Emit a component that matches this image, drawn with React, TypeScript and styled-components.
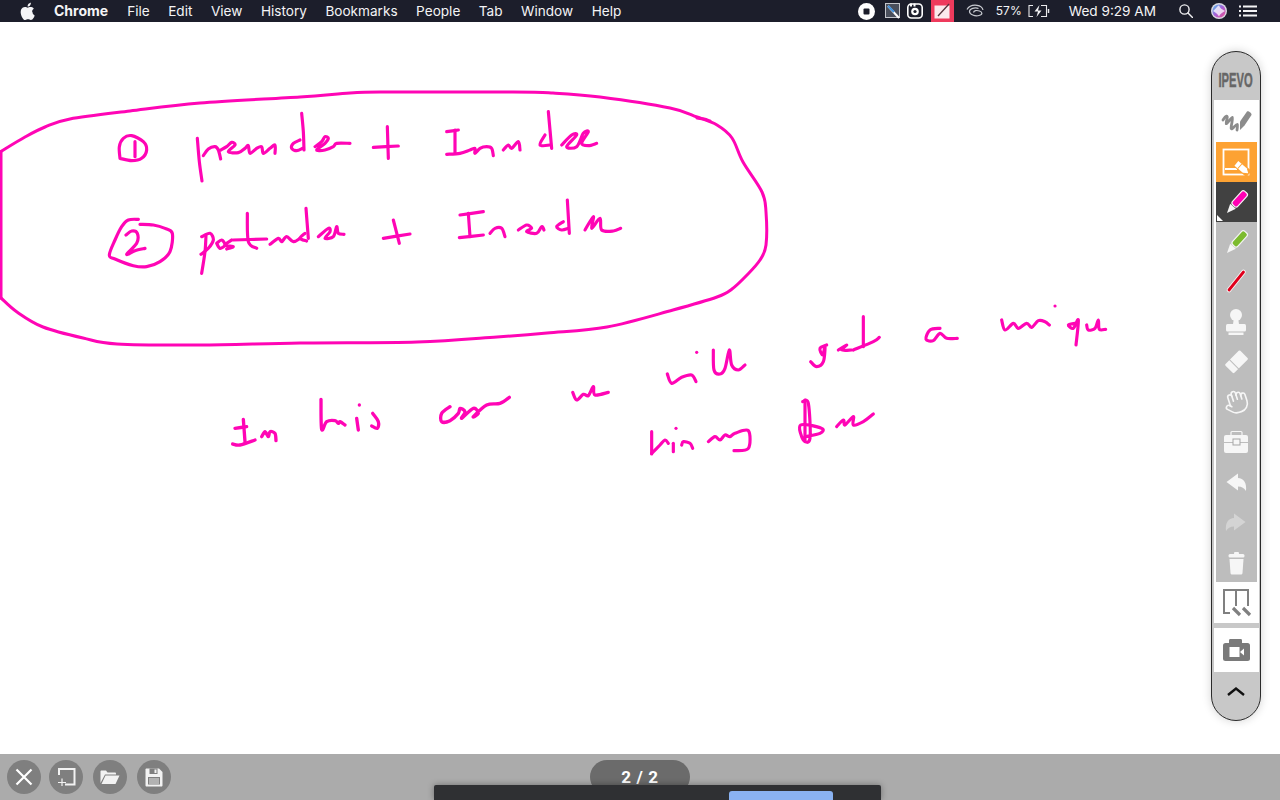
import React from "react";
import styled, { createGlobalStyle } from "styled-components";
import { Hand } from "lucide-react";

const GlobalStyle = createGlobalStyle`
  html, body {
    margin: 0;
    padding: 0;
    height: 100%;
    overflow: hidden;
    background: #fff;
  }
  #root {
    height: 100%;
  }
`;

const INK = "#ff05b5";

// ink strokes, each list of points is one pen stroke. coords are in page pixels (scale 1)
// or in 3x crops offset by ox/oy (scale 1/3), which was easier to trace
const inkLayers = [
  {
    ox: 0,
    oy: 0,
    scale: 1,
    width: 3,
    strokes: [
      "0,152 0,152 25,137 45,127 70,119 130,111 200,103 300,97 350,93 380,92 513,92 553,93 600,97 670,108 697,117 717,125 732,138 743,162 762,192 766,212 766,245 760,260 747,275 732,289 717,297 673,310 607,327 547,333 497,337 417,342 300,343 200,345 117,344 83,338 43,327 17,312 1,298 1,298",
      "1,298 1,152",
      "697,118 704,119 710,121",
    ],
  },
  {
    ox: 0,
    oy: 85,
    scale: 1 / 3,
    width: 9.5,
    strokes: [
      "360,220 358,185 370,160 395,152 430,170 440,195 425,220 395,227 360,220",
      "405,170 405,215",
      "592,160 598,230 606,288",
      "610,212 625,192 645,185 655,195 662,222",
      "662,195 680,185 695,172 705,180 685,200 715,203 735,190 745,182 750,205 770,190 785,185 790,205 810,190 825,180 825,205",
      "905,85 910,140 912,195",
      "900,165 880,175 875,190 890,197 908,190",
      "945,185 965,170 975,155 985,160 975,175 950,195 975,195 1000,185 1010,175 1050,175",
      "415,403 385,405 365,425 345,465 328,510 345,522 400,542 440,545 480,530 510,500 517,445 495,430 460,420 420,418",
      "378,450 395,438 412,445 410,475 380,508 405,497 435,490",
      "618,450 615,500 605,565",
      "605,455 630,445 640,465 625,490 603,508",
      "650,475 665,465 675,480 660,490 650,475",
      "695,465 675,480 700,485 680,492",
      "742,385 745,470 770,490",
      "700,465 800,462",
      "810,478 835,460 845,470 860,455 880,470 900,460",
      "918,370 925,460",
      "915,445 900,460 920,468",
      "955,455 985,430 990,440 975,460 1000,455 1010,425 1015,445 1032,448",
    ],
  },
  {
    ox: 380,
    oy: 85,
    scale: 1 / 3,
    width: 9.5,
    strokes: [
      "-20,187 55,183",
      "22,125 25,220",
      "200,140 235,135",
      "225,135 225,205",
      "200,208 240,205 270,195 285,190 285,205 300,190 320,185 335,190 340,212",
      "370,195 385,180 395,190 415,170 420,195",
      "505,80 515,190",
      "495,150 480,180 510,180",
      "545,180 575,150 590,150 560,185 590,185 610,145 625,140 605,175 625,182 650,175",
      "10,460 90,447",
      "40,405 58,475",
      "240,390 310,380",
      "265,385 270,455",
      "238,458 310,450",
      "330,445 345,430 365,430 375,455",
      "415,435 440,420 455,430 440,440 470,445 485,425 492,435",
      "562,345 568,445",
      "550,410 530,425 545,435 565,430",
      "615,435 640,395 635,430 660,400 665,435 700,438 722,430",
    ],
  },
  {
    ox: 220,
    oy: 380,
    scale: 1 / 3,
    width: 10,
    strokes: [
      "45,145 80,140",
      "70,118 75,185",
      "38,192 60,195 105,180",
      "125,170 135,155 145,170 150,155 165,160 168,182",
      "303,58 305,148 320,125 345,122 355,130 360,125 375,135",
      "410,115 415,150",
      "418,75",
      "458,100 475,125 472,145 455,138",
      "690,80 665,100 665,125 690,122 715,100 720,85 735,95 725,115 760,85 775,100 760,110 800,75 840,70 868,52",
    ],
  },
  {
    ox: 560,
    oy: 375,
    scale: 1 / 3,
    width: 9.5,
    strokes: ["38,52 50,75 70,58 85,62 100,35 105,60 145,52"],
  },
  {
    ox: 640,
    oy: 300,
    scale: 1 / 3,
    width: 9.5,
    strokes: [
      "82,222 95,250 125,232 155,225 168,245",
      "170,157",
      "220,150 222,210 240,222 255,205 268,150 275,195 295,210 315,195",
      "560,135 540,145 548,165 555,140 550,185 530,200 512,185",
      "595,150 620,135 605,150 635,150",
      "670,50 670,140",
      "640,150 700,125 718,112",
      "900,85 870,90 858,118 880,122 900,100 920,115 952,115",
      "1085,60 1095,90 1120,70 1135,85 1160,70 1175,82 1195,62 1215,65 1228,75",
      "1245,18",
      "1305,70 1285,75 1300,85 1315,60 1308,135",
      "1340,75 1345,90 1365,85 1375,60 1378,88 1397,88",
      "35,395 35,462",
      "35,460 60,435 75,420 85,430",
      "100,430 100,455",
      "108,385",
      "125,435 130,425 150,430 158,445",
      "205,425 225,410 240,420 255,405 270,410 285,400 325,392 325,445 282,452",
      "495,300 495,420",
      "488,305 505,310 510,415 490,420 482,375 545,385 540,400 495,410",
      "590,380 610,360 615,375 640,350 640,375 670,365 700,342",
    ],
  },
];

// catmull-rom through the traced points, so loops stay but corners don't look ruled
const strokePath = (stroke: string) => {
  const pts = stroke.split(" ").map((p) => p.split(",").map(Number));
  if (pts.length === 1) return `M${pts[0][0]} ${pts[0][1]}l.1 0`;
  let d = `M${pts[0][0]} ${pts[0][1]}`;
  for (let i = 0; i < pts.length - 1; i++) {
    const p0 = pts[Math.max(i - 1, 0)];
    const p1 = pts[i];
    const p2 = pts[i + 1];
    const p3 = pts[Math.min(i + 2, pts.length - 1)];
    const c1x = p1[0] + (p2[0] - p0[0]) / 6;
    const c1y = p1[1] + (p2[1] - p0[1]) / 6;
    const c2x = p2[0] - (p3[0] - p1[0]) / 6;
    const c2y = p2[1] - (p3[1] - p1[1]) / 6;
    d += `C${c1x} ${c1y} ${c2x} ${c2y} ${p2[0]} ${p2[1]}`;
  }
  return d;
};

const menuItems = ["File", "Edit", "View", "History", "Bookmarks", "People", "Tab", "Window", "Help"];

const Page = styled.div`
  display: flex;
  flex-direction: column;
  width: 1280px;
  height: 800px;
  overflow: hidden;
`;

const MenuBar = styled.header`
  display: flex;
  align-items: center;
  justify-content: space-between;
  flex: none;
  height: 22px;
  padding: 0 23px 0 18px;
  background: #1c1e2b;
  color: #f4f4f6;
  font: 400 13.6px/22px Inter, "Liberation Sans", sans-serif;
`;

const MenuLeft = styled.nav`
  display: flex;
  align-items: center;
`;

const AppleMark = styled.svg`
  display: block;
  width: 17px;
  height: 20.5px;
  margin-right: 19px;
`;

const AppName = styled.span`
  font-weight: 700;
  font-size: 14px;
  margin-right: 19px;
`;

const MenuItem = styled.span`
  margin-right: 18.5px;
`;

const MenuRight = styled.div`
  display: flex;
  align-items: center;
  height: 22px;
`;

const StatusIcon = styled.svg<{ $gap: number }>`
  display: block;
  flex: none;
  margin-left: ${(p) => p.$gap}px;
`;

const StatusText = styled.span<{ $gap: number; $size?: number }>`
  margin-left: ${(p) => p.$gap}px;
  font-size: ${(p) => p.$size ?? 13.6}px;
  white-space: nowrap;
`;

const RedTile = styled.div`
  display: flex;
  align-items: center;
  justify-content: center;
  width: 23px;
  height: 22px;
  margin-left: 8px;
  background: #ee3a5c;
`;

const Canvas = styled.main`
  position: relative;
  flex: 1;
  min-height: 0;
  background: #fff;
`;

const InkSheet = styled.svg`
  display: block;
  width: 100%;
  height: 100%;
`;

const Toolbar = styled.aside`
  position: absolute;
  top: 29px;
  right: 19px;
  display: flex;
  flex-direction: column;
  box-sizing: border-box;
  width: 50px;
  height: 670px;
  border: 1.5px solid #2b2b2b;
  border-radius: 25px;
  background: #c8c8c8;
  box-shadow: 0 0 10px rgba(0, 0, 0, 0.18);
`;

const BrandCap = styled.div`
  display: flex;
  align-items: center;
  justify-content: center;
  flex: none;
  height: 47.5px;
  padding-top: 8px;
  box-sizing: border-box;
`;

const Brand = styled.span`
  color: #666;
  font: 700 20px/1 "Liberation Sans", sans-serif;
  -webkit-text-stroke: 0.5px #666;
  transform: scaleX(0.56);
`;

const WhiteGroup = styled.div`
  display: flex;
  flex-direction: column;
  flex: none;
  margin: 0 1.5px;
  padding: 0 2px;
  background: #fff;
`;

const toneColor = { white: "#fff", orange: "#fda233", dark: "#414141", grey: "#bdbdbd" };

const Slot = styled.div<{ $tone: keyof typeof toneColor; $h?: number }>`
  position: relative;
  flex: none;
  height: ${(p) => p.$h ?? 40}px;
  background: ${(p) => toneColor[p.$tone]};
`;

const SlotIcon = styled.svg`
  display: block;
  width: 40px;
  height: 100%;
`;

const HandIcon = styled(Hand)`
  display: block;
  margin: 7px 0 0 7px;
  color: #f6f6f6;
  transform: rotate(-18deg);
`;

const CornerFlag = styled.span`
  position: absolute;
  left: 1px;
  bottom: 1px;
  width: 0;
  height: 0;
  border-left: 6px solid #fff;
  border-top: 6px solid transparent;
`;

const CameraGroup = styled(WhiteGroup)`
  margin-top: 5px;
`;

const CollapseCap = styled.div`
  display: flex;
  align-items: center;
  justify-content: center;
  flex: 1;
  padding-bottom: 9px;
`;

const BottomBar = styled.footer`
  position: relative;
  display: flex;
  align-items: flex-start;
  flex: none;
  box-sizing: border-box;
  height: 46px;
  padding: 6px 0 0 7px;
  background: #ababab;
`;

const RoundButton = styled.button<{ $gap: number }>`
  display: flex;
  align-items: center;
  justify-content: center;
  flex: none;
  width: 34px;
  height: 34px;
  margin-left: ${(p) => p.$gap}px;
  padding: 0;
  border: 0;
  border-radius: 50%;
  background: #7f7f7f;
`;

const PagePill = styled.div`
  position: absolute;
  top: 6px;
  left: 590px;
  box-sizing: border-box;
  width: 100px;
  height: 34px;
  border-radius: 17px;
  background: #6b6b6b;
  color: #fff;
  font: 700 17px/35px Roboto, "Liberation Sans", sans-serif;
  letter-spacing: 0.6px;
  text-align: center;
`;

const ShareBar = styled.div`
  position: absolute;
  left: 434px;
  top: 31px;
  width: 447px;
  height: 15px;
  border-radius: 2px 2px 0 0;
  background: #2f3033;
  box-shadow: 0 0 6px rgba(0, 0, 0, 0.35);
`;

const ShareButton = styled.div`
  position: absolute;
  left: 295px;
  top: 6px;
  width: 104px;
  height: 9px;
  border-radius: 3px 3px 0 0;
  background: #8ab2f2;
`;

const Marker = ({ color }: { color: string }) => (
  <SlotIcon viewBox="0 0 40 40">
    <g transform="translate(11 31) rotate(42)">
      <path d="M0 0L-3.800 -9H3.800Z" fill="#f5f5f5" />
      <rect x="-3.600" y="-28" width="7.200" height="18" rx="2.400" fill={color} stroke="#f5f5f5" strokeWidth="1.200" />
    </g>
  </SlotIcon>
);

export default function App() {
  return (
    <Page>
      <GlobalStyle />
      <MenuBar>
        <MenuLeft>
          <AppleMark viewBox="0 0 14 17">
            <path
              fill="#f4f4f6"
              d="M11.6 9c0-1.7 1.4-2.5 1.5-2.6-.8-1.2-2.1-1.4-2.5-1.4-1.1-.1-2.1.6-2.6.6-.6 0-1.4-.6-2.3-.6C4.500 5 3.400 5.700 2.800 6.700c-1.300 2.200-.3 5.500.9 7.300.6.900 1.300 1.900 2.300 1.800.9 0 1.200-.6 2.300-.6s1.400.6 2.300.6c1 0 1.600-.9 2.200-1.700.7-1 1-2 1-2.100-.1 0-1.900-.7-1.900-3zM9.900 3.700c.5-.6.800-1.400.7-2.200-.7 0-1.500.5-2 1-.4.500-.8 1.300-.7 2.100.8.100 1.500-.4 2-.9z"
            />
          </AppleMark>
          <AppName>Chrome</AppName>
          {menuItems.map((item) => (
            <MenuItem key={item}>{item}</MenuItem>
          ))}
        </MenuLeft>
        <MenuRight>
          <StatusIcon $gap={0} width="17" height="17" viewBox="0 0 17 17">
            <circle cx="8.500" cy="8.500" r="8.500" fill="#fff" />
            <rect x="5.500" y="5.500" width="6" height="6" rx="1" fill="#1c1e2b" />
          </StatusIcon>
          <StatusIcon $gap={10} width="16" height="18" viewBox="0 0 16 18">
            <rect x="0.500" y="1.500" width="14" height="14" fill="#4a4f5c" stroke="#c4c6cc" />
            <path d="M3 4L14 16" stroke="#fff" strokeWidth="2" />
            <path d="M3 4L9 10" stroke="#3f8fdc" strokeWidth="2" />
          </StatusIcon>
          <StatusIcon $gap={6} width="16" height="18" viewBox="0 0 16 18">
            <rect x="0.800" y="2" width="14.400" height="14" rx="3.500" fill="none" stroke="#fff" strokeWidth="1.600" />
            <circle cx="8" cy="9.500" r="3.800" fill="#fff" />
            <circle cx="8" cy="9.500" r="1.600" fill="#1c1e2b" />
            <rect x="3" y="1.500" width="2" height="3" fill="#fff" />
            <rect x="6.500" y="1.500" width="2" height="3" fill="#fff" />
          </StatusIcon>
          <RedTile>
            <svg width="17" height="16" viewBox="0 0 17 16">
              <rect x="0.500" y="2.500" width="15" height="13" fill="#fbe9ec" />
              <path d="M4 13L15 1" stroke="#55333b" strokeWidth="1.300" />
            </svg>
          </RedTile>
          <StatusIcon $gap={12} width="18" height="14" viewBox="0 0 18 14" fill="none" stroke="#c9cbd1" strokeWidth="1.200">
            <path d="M1 5.500C3 2 7 .8 11 1.300S16.500 3.500 17 6" />
            <path d="M12.500 4.500C9 3 3.500 4.500 3.500 7.500S9 12.500 13 11.500 16.500 8 13.500 7 8 6.500 7.500 8.500" />
          </StatusIcon>
          <StatusText $gap={12} $size={12}>57%</StatusText>
          <StatusIcon $gap={6} width="22" height="14" viewBox="0 0 22 14" fill="none" stroke="#e9e9ec" strokeWidth="1.100">
            <path d="M5 1.500H1v11h4M13 1.500h5.500v11H13" />
            <path d="M20.500 5v4" strokeWidth="1.500" />
            <path d="M11.500 1L6.500 7.500h3.500L8.500 13l5-6.500H10Z" fill="#f4f4f6" stroke="none" />
          </StatusIcon>
          <StatusText $gap={19}>Wed 9:29 AM</StatusText>
          <StatusIcon $gap={23} width="14" height="14" viewBox="0 0 14 14" fill="none" stroke="#f0f0f2" strokeWidth="1.400">
            <circle cx="5.500" cy="5.500" r="4.600" />
            <path d="M9 9l4.500 4.500" strokeLinecap="round" />
          </StatusIcon>
          <StatusIcon $gap={18} width="16" height="16" viewBox="0 0 16 16">
            <defs>
              <linearGradient id="siri" x1="0" y1="0" x2="1" y2="1">
                <stop offset="0" stopColor="#4fc6ee" />
                <stop offset="0.500" stopColor="#a65fd6" />
                <stop offset="1" stopColor="#ea4f8e" />
              </linearGradient>
            </defs>
            <circle cx="8" cy="8" r="8" fill="#d9d9e2" />
            <circle cx="8" cy="8" r="6.600" fill="url(#siri)" />
            <path d="M2 8C5 6 6 3 8 2.500 9 5 11 6.500 14 8 11 9.500 9 11 8 13.500 6.500 11 5 9.500 2 8Z" fill="#fff" opacity="0.75" />
          </StatusIcon>
          <StatusIcon $gap={12} width="18" height="12" viewBox="0 0 18 12" fill="#f4f4f6">
            <rect x="0" y="0.500" width="2" height="2" />
            <rect x="4" y="0.500" width="14" height="2" />
            <rect x="0" y="5" width="2" height="2" />
            <rect x="4" y="5" width="14" height="2" />
            <rect x="0" y="9.500" width="2" height="2" />
            <rect x="4" y="9.500" width="14" height="2" />
          </StatusIcon>
        </MenuRight>
      </MenuBar>

      <Canvas>
        <InkSheet viewBox="0 22 1280 732" fill="none" stroke={INK} strokeLinecap="round" strokeLinejoin="round">
          {inkLayers.map((layer) => (
            <g key={`${layer.ox}-${layer.oy}`} transform={`translate(${layer.ox} ${layer.oy}) scale(${layer.scale})`} strokeWidth={layer.width}>
              {layer.strokes.map((stroke) => (
                <path key={stroke} d={strokePath(stroke)} />
              ))}
            </g>
          ))}
        </InkSheet>

        <Toolbar>
          <BrandCap>
            <Brand>IPEVO</Brand>
          </BrandCap>
          <WhiteGroup>
            <Slot $tone="white" $h={42}>
              <SlotIcon viewBox="0 0 40 42">
                <path d="M7 20C10 15 12 15 11 19S9 26 13 21 17 16 16 22 14 31 18 27 22 23 21 30" fill="none" stroke="#8c8c8c" strokeWidth="2.800" strokeLinecap="round" />
                <path d="M24 30L24 21.500 31 11.500C32 10.500 36 13 35.500 15L28.500 25.500Z" fill="#8c8c8c" />
              </SlotIcon>
            </Slot>
            <Slot $tone="orange">
              <SlotIcon viewBox="0 0 40 40" fill="none">
                <rect x="7.500" y="7.500" width="25" height="25" stroke="#fff" strokeWidth="1.800" />
                <path d="M9 27H21" stroke="#fff" strokeWidth="2" />
                <g transform="translate(26.500 26.500) rotate(40)">
                  <rect x="-8.500" y="-4" width="17" height="8" rx="1" fill="#fda233" />
                  <path d="M-8 -3H3L7.500 0 3 3H-8Z" fill="#fff" />
                  <path d="M-3.500 -3V3" stroke="#fda233" strokeWidth="1" />
                </g>
              </SlotIcon>
            </Slot>
            <Slot $tone="dark">
              <Marker color="#ff00b4" />
              <CornerFlag />
            </Slot>
            <Slot $tone="grey">
              <Marker color="#7cbb2e" />
            </Slot>
            <Slot $tone="grey">
              <SlotIcon viewBox="0 0 40 40" fill="none" strokeLinecap="round">
                <path d="M13 28L27.500 10" stroke="#f5f5f5" strokeWidth="4.600" />
                <path d="M13 28L27.500 10" stroke="#e0001c" strokeWidth="2.800" />
              </SlotIcon>
            </Slot>
            <Slot $tone="grey">
              <SlotIcon viewBox="0 0 40 40" fill="#f6f6f6">
                <circle cx="20" cy="13" r="6" />
                <path d="M18 16H22L23 22H17Z" />
                <rect x="10" y="22" width="20" height="7.500" rx="1.500" />
                <rect x="12.500" y="30.500" width="15" height="2.500" />
              </SlotIcon>
            </Slot>
            <Slot $tone="grey">
              <SlotIcon viewBox="0 0 40 40">
                <g transform="rotate(-45 20 20)">
                  <rect x="10" y="14" width="21" height="12.500" rx="1.200" fill="#f6f6f6" />
                  <rect x="16.500" y="13" width="1" height="14" fill="#bdbdbd" />
                </g>
              </SlotIcon>
            </Slot>
            <Slot $tone="grey">
              <HandIcon size={26} strokeWidth={1.500} />
            </Slot>
            <Slot $tone="grey">
              <SlotIcon viewBox="0 0 40 40">
                <path d="M15 13V10.500C15 10 15.500 9.500 16 9.500H25C25.500 9.500 26 10 26 10.500V13" fill="none" stroke="#f6f6f6" strokeWidth="1.200" />
                <rect x="8" y="13" width="24" height="18" rx="2" fill="#f6f6f6" />
                <path d="M8 20.500H32" stroke="#bdbdbd" strokeWidth="1" />
                <rect x="17" y="17" width="7" height="6" fill="#f6f6f6" stroke="#a5a5a5" strokeWidth="1" />
              </SlotIcon>
            </Slot>
            <Slot $tone="grey">
              <SlotIcon viewBox="0 0 40 40">
                <path d="M10.500 20L22 11.500V16C27.500 16 31 21 30 29 28 26 26 24.500 22 24.500V28.500Z" fill="#f6f6f6" />
              </SlotIcon>
            </Slot>
            <Slot $tone="grey">
              <SlotIcon viewBox="0 0 40 40">
                <path d="M29.500 20L18 11.500V16C12.500 16 9 21 10 29 12 26 14 24.500 18 24.500V28.500Z" fill="#d4d4d4" />
              </SlotIcon>
            </Slot>
            <Slot $tone="grey">
              <SlotIcon viewBox="0 0 40 40" fill="#f6f6f6">
                <rect x="18" y="10" width="5" height="2.500" rx="1" />
                <rect x="12.500" y="12" width="16" height="3.500" rx="1.500" />
                <path d="M13.500 17H27.500L26.500 31C26.400 32 25.500 32.500 25 32.500H16C15.500 32.500 14.600 32 14.500 31Z" />
              </SlotIcon>
            </Slot>
            <Slot $tone="white" $h={41}>
              <SlotIcon viewBox="0 0 40 41" fill="none">
                <path d="M14 31H8V8H32V24" stroke="#808080" strokeWidth="2" />
                <path d="M20 8V24" stroke="#808080" strokeWidth="2" />
                <path d="M17 26L24 33" stroke="#808080" strokeWidth="3.200" />
                <path d="M27 26L34 33" stroke="#808080" strokeWidth="3.200" />
              </SlotIcon>
            </Slot>
          </WhiteGroup>
          <CameraGroup>
            <Slot $tone="white" $h={44}>
              <SlotIcon viewBox="0 0 40 44">
                <path d="M13 16V12.500C13 11.500 13.500 11 14.500 11H24.500C25.500 11 26 11.500 26 12.500V16Z" fill="#7a7a7a" />
                <rect x="7" y="15" width="27" height="18" rx="2.500" fill="#7a7a7a" />
                <rect x="13.500" y="19" width="10" height="10" fill="#fff" />
                <path d="M24 24L28 20.500V27.500Z" fill="#fff" />
              </SlotIcon>
            </Slot>
          </CameraGroup>
          <CollapseCap>
            <svg width="20" height="11" viewBox="0 0 20 11" fill="none">
              <path d="M2 9L10 2.500 18 9" stroke="#111" strokeWidth="2.400" />
            </svg>
          </CollapseCap>
        </Toolbar>
      </Canvas>

      <BottomBar>
        <RoundButton $gap={0}>
          <svg width="20" height="20" viewBox="0 0 20 20">
            <path d="M2.500 2.500L17.500 17.500M17.500 2.500L2.500 17.500" stroke="#fff" strokeWidth="2.200" />
          </svg>
        </RoundButton>
        <RoundButton $gap={8}>
          <svg width="20" height="22" viewBox="0 0 20 22" fill="none" stroke="#f2f2f2" strokeWidth="2">
            <path d="M3 9V3H18.500V18.500H9" />
            <path d="M6 12.500V20M2 16.500H10" strokeWidth="1.200" />
          </svg>
        </RoundButton>
        <RoundButton $gap={10}>
          <svg width="20" height="16" viewBox="0 0 20 16">
            <path d="M0.500 14V2.500C0.500 1.800 1 1.500 1.500 1.500H6L7.500 3.500H15C15.500 3.500 16 4 16 4.500V5.500H5L0.500 14Z" fill="#f2f2f2" />
            <path d="M5.500 6.500H19.500L15.500 15H1.500Z" fill="#f2f2f2" />
          </svg>
        </RoundButton>
        <RoundButton $gap={10}>
          <svg width="18" height="19" viewBox="0 0 18 19">
            <path d="M0.500 1.500C0.500 1 1 .5 1.500 .5H14L17.500 4V17.500C17.500 18 17 18.500 16.500 18.500H1.500C1 18.500 .5 18 .5 17.500Z" fill="#f2f2f2" />
            <rect x="4.500" y="0.500" width="8" height="5.500" fill="#7f7f7f" />
            <rect x="9.500" y="1.500" width="2" height="3.500" fill="#f2f2f2" />
            <rect x="3" y="9" width="12" height="7.500" fill="#7f7f7f" />
            <path d="M4 11H14M4 13H14M4 15H14" stroke="#f2f2f2" strokeWidth="0.900" />
          </svg>
        </RoundButton>
        <PagePill>2 / 2</PagePill>
        <ShareBar>
          <ShareButton />
        </ShareBar>
      </BottomBar>
    </Page>
  );
}
